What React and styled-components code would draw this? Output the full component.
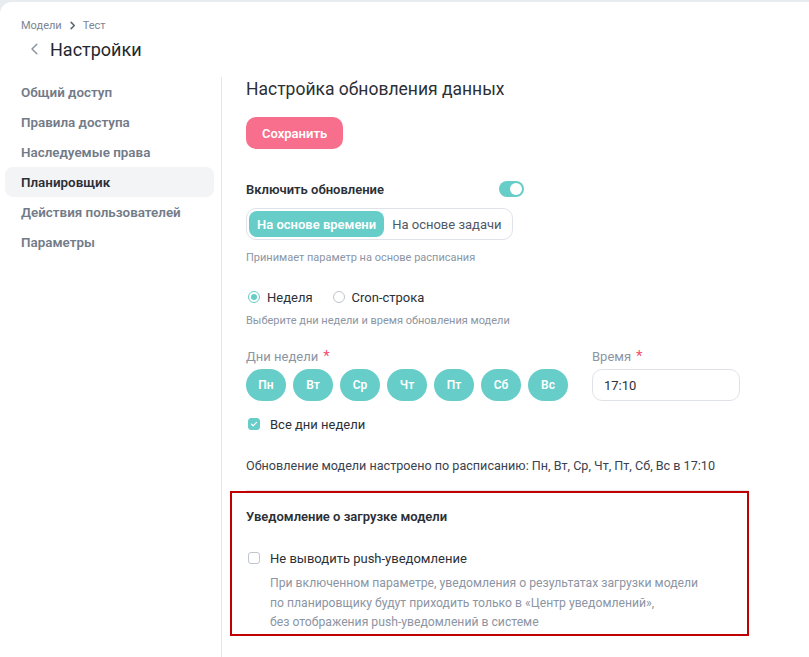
import React, { useState } from 'react';
import styled, { createGlobalStyle } from 'styled-components';

const GlobalStyle = createGlobalStyle`
    html, body {
        margin: 0;
        padding: 0;
        background: #e9ecef;
    }
    body {
        font-family: Roboto, "Noto Sans", sans-serif;
        color: #2b2f36;
    }
    * {
        box-sizing: border-box;
    }
`;

const teal = '#66cdc9';
const muted = '#8c95a3';
const line = '#e3e6ea';

const Page = styled.div`
    margin-top: 2px;
    min-height: 655px;
    background: #fff;
    border-top-left-radius: 12px;
    display: flex;
    flex-direction: column;
`;
const Header = styled.div`
    padding: 15px 0 0 21px;
`;
const Breadcrumbs = styled.div`
    display: flex;
    align-items: center;
    gap: 6px;
    font-size: 11px;
    color: #7b8594;
    height: 16px;
`;
const TitleRow = styled.div`
    display: flex;
    align-items: center;
    gap: 9px;
    margin-top: 3px;
    padding-left: 8px;
    height: 26px;
`;
const Title = styled.h1`
    margin: 0;
    font-size: 18px;
    font-weight: 400;
    color: #23272e;
`;
const Body = styled.div`
    display: flex;
    flex: 1;
    margin-top: 15px;
`;
const Sidebar = styled.nav`
    width: 222px;
    border-right: 1px solid ${line};
    padding: 0 7px 0 5px;
    display: flex;
    flex-direction: column;
`;
const NavItem = styled.div`
    height: 30px;
    display: flex;
    align-items: center;
    padding-left: 16px;
    border-radius: 8px;
    font-size: 13.4px;
    font-weight: 600;
    color: ${p => p.$active ? '#2b2f36' : '#727b88'};
    background: ${p => p.$active ? '#f3f4f6' : 'transparent'};
`;
const Content = styled.main`
    flex: 1;
    padding: 0 60px 0 24px;
`;
const SectionTitle = styled.h2`
    margin: 0;
    font-size: 17.5px;
    font-weight: 400;
    color: #2b2f36;
    height: 24px;
    line-height: 24px;
`;
const PrimaryButton = styled.button`
    margin-top: 16px;
    height: 32px;
    padding: 0 16px;
    border: none;
    border-radius: 10px;
    background: #f76f8c;
    color: #fff;
    font-family: inherit;
    font-size: 13px;
    font-weight: 600;
`;
const FieldHeader = styled.div`
    display: flex;
    align-items: center;
    justify-content: space-between;
    width: 278px;
    margin-top: 30px;
    height: 20px;
`;
const Strong = styled.div`
    font-size: 13px;
    font-weight: 600;
    color: #2b2f36;
`;
const Toggle = styled.div`
    width: 25px;
    height: 16px;
    border-radius: 8px;
    background: ${teal};
    position: relative;
    &::after {
        content: '';
        position: absolute;
        right: 2px;
        top: 2px;
        width: 12px;
        height: 12px;
        border-radius: 50%;
        background: #fff;
    }
`;
const Segmented = styled.div`
    display: inline-flex;
    margin-top: 9px;
    padding: 2px;
    border: 1px solid #dfe3e8;
    border-radius: 10px;
    height: 32px;
`;
const Segment = styled.div`
    display: flex;
    align-items: center;
    padding: 0 8px;
    border-radius: 8px;
    font-size: 13px;
    font-weight: ${p => p.$active ? 600 : 400};
    color: ${p => p.$active ? '#fff' : '#4f5866'};
    background: ${p => p.$active ? teal : 'transparent'};
`;
const Hint = styled.div`
    font-size: 11px;
    color: ${muted};
    margin-top: ${p => p.$mt || 8}px;
    line-height: 16px;
`;
const RadioGroup = styled.div`
    display: flex;
    gap: 18px;
    margin-top: 23px;
    height: 16px;
    align-items: center;
`;
const RadioLabel = styled.label`
    display: flex;
    align-items: center;
    gap: 7px;
    font-size: 13px;
    color: #2b2f36;
    padding-left: 2px;
`;
const RadioDot = styled.span`
    width: 12px;
    height: 12px;
    border-radius: 50%;
    border: 1px solid ${p => p.$checked ? teal : '#bfc5ce'};
    display: flex;
    align-items: center;
    justify-content: center;
    &::after {
        content: '';
        width: 6px;
        height: 6px;
        border-radius: 50%;
        background: ${p => p.$checked ? teal : 'transparent'};
    }
`;
const ScheduleRow = styled.div`
    display: flex;
    gap: 24px;
    margin-top: 20px;
`;
const Field = styled.div`
    display: flex;
    flex-direction: column;
    gap: 4px;
`;
const Label = styled.div`
    font-size: 13px;
    color: ${muted};
    height: 16px;
    display: flex;
    align-items: flex-start;
    gap: 5px;
    &::after {
        content: '*';
        color: #f0506e;
        font-size: 15px;
        line-height: 14px;
    }
`;
const Days = styled.div`
    display: flex;
    gap: 7px;
`;
const DayPill = styled.div`
    width: 40px;
    height: 32px;
    border-radius: 16px;
    background: ${teal};
    color: #fff;
    font-size: 12px;
    font-weight: 600;
    display: flex;
    align-items: center;
    justify-content: center;
`;
const TimeInput = styled.div`
    width: 148px;
    height: 32px;
    border: 1px solid #dfe3e8;
    border-radius: 10px;
    padding: 0 11px;
    font-size: 13px;
    display: flex;
    align-items: center;
    color: #2b2f36;
`;
const CheckRow = styled.label`
    display: flex;
    align-items: center;
    gap: 10px;
    margin-top: ${p => p.$mt || 0}px;
    padding-left: 2px;
    font-size: 13px;
    color: #2b2f36;
    height: 16px;
`;
const Box = styled.span`
    width: 12px;
    height: 12px;
    border-radius: 3px;
    border: 1px solid ${p => p.$checked ? teal : '#bfc5ce'};
    background: ${p => p.$checked ? teal : '#fff'};
    display: flex;
    align-items: center;
    justify-content: center;
`;
const Summary = styled.div`
    margin-top: 26px;
    font-size: 12.6px;
    color: #3a4250;
    padding-bottom: 17px;
    border-bottom: 1px solid ${line};
`;
const Highlight = styled.section`
    margin: 0 0 0 -16px;
    border: 2px solid #c00000;
    padding: 16px 14px 1px 14px;
`;
const Description = styled.div`
    margin-top: 8px;
    padding-left: 24px;
    font-size: 12.2px;
    color: ${muted};
    line-height: 19.5px;
`;

const Chevron = ({ size = 10, dir = 'right', color = '#7b8594', width = 1.6 }) => (
    <svg width={size} height={size} viewBox="0 0 10 10" fill="none">
        <path
            d={dir === 'right' ? 'M3.5 1.5 L7 5 L3.5 8.5' : 'M6.5 1 L2.5 5 L6.5 9'}
            stroke={color}
            strokeWidth={width}
            strokeLinecap="round"
            strokeLinejoin="round"
        />
    </svg>
);

const Check = () => (
    <svg width="8" height="8" viewBox="0 0 8 8" fill="none">
        <path d="M1.5 4.2 L3.2 5.8 L6.5 2.3" stroke="#fff" strokeWidth="1.2" strokeLinecap="round" strokeLinejoin="round" />
    </svg>
);

const navItems = ['Общий доступ', 'Правила доступа', 'Наследуемые права', 'Планировщик', 'Действия пользователей', 'Параметры'];
const days = ['Пн', 'Вт', 'Ср', 'Чт', 'Пт', 'Сб', 'Вс'];

export default function App() {
    const [mode, setMode] = useState('time');
    return (
        <>
            <GlobalStyle />
            <Page>
                <Header>
                    <Breadcrumbs>
                        <span>Модели</span>
                        <Chevron size={9} width={1.8} color="#5f6875" />
                        <span>Тест</span>
                    </Breadcrumbs>
                    <TitleRow>
                        <Chevron size={12} dir="left" color="#8a93a0" width={1.2} />
                        <Title>Настройки</Title>
                    </TitleRow>
                </Header>
                <Body>
                    <Sidebar>
                        {navItems.map(item => (
                            <NavItem key={item} $active={item === 'Планировщик'}>{item}</NavItem>
                        ))}
                    </Sidebar>
                    <Content>
                        <SectionTitle>Настройка обновления данных</SectionTitle>
                        <PrimaryButton>Сохранить</PrimaryButton>
                        <FieldHeader>
                            <Strong>Включить обновление</Strong>
                            <Toggle />
                        </FieldHeader>
                        <Segmented>
                            <Segment $active={mode === 'time'} onClick={() => setMode('time')}>На основе времени</Segment>
                            <Segment $active={mode === 'task'} onClick={() => setMode('task')}>На основе задачи</Segment>
                        </Segmented>
                        <Hint $mt={10}>Принимает параметр на основе расписания</Hint>
                        <RadioGroup>
                            <RadioLabel><RadioDot $checked />Неделя</RadioLabel>
                            <RadioLabel><RadioDot />Cron-строка</RadioLabel>
                        </RadioGroup>
                        <Hint $mt={8}>Выберите дни недели и время обновления модели</Hint>
                        <ScheduleRow>
                            <Field>
                                <Label>Дни недели</Label>
                                <Days>
                                    {days.map(d => <DayPill key={d}>{d}</DayPill>)}
                                </Days>
                            </Field>
                            <Field>
                                <Label>Время</Label>
                                <TimeInput>17:10</TimeInput>
                            </Field>
                        </ScheduleRow>
                        <CheckRow $mt={15}>
                            <Box $checked><Check /></Box>
                            Все дни недели
                        </CheckRow>
                        <Summary>Обновление модели настроено по расписанию: Пн, Вт, Ср, Чт, Пт, Сб, Вс в 17:10</Summary>
                        <Highlight>
                            <Strong>Уведомление о загрузке модели</Strong>
                            <CheckRow $mt={26}>
                                <Box />
                                Не выводить push-уведомление
                            </CheckRow>
                            <Description>
                                При включенном параметре, уведомления о результатах загрузки модели<br />
                                по планировщику будут приходить только в «Центр уведомлений»,<br />
                                без отображения push-уведомлений в системе
                            </Description>
                        </Highlight>
                    </Content>
                </Body>
            </Page>
        </>
    );
}
